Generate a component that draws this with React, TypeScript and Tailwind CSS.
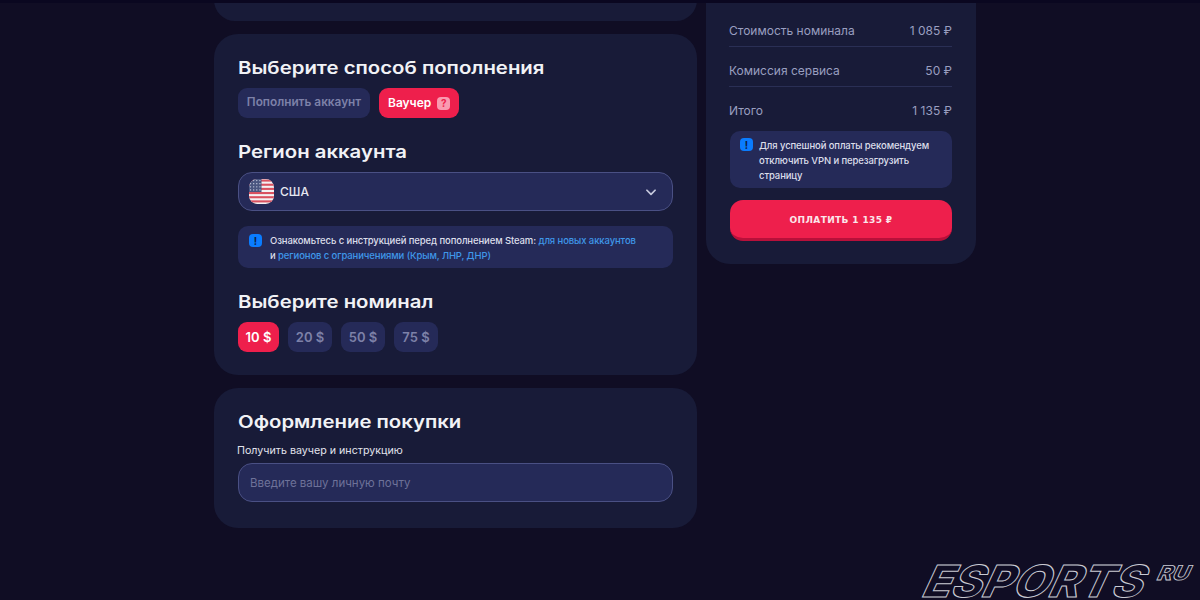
import React from "react";

const H = ({ children, className = "" }: { children: React.ReactNode; className?: string }) => (
  <h2 className={"origin-left scale-x-[1.163] text-[17.5px] leading-[24px] font-semibold whitespace-nowrap text-[#f1f2f6] " + className}>{children}</h2>
);

const Info = () => (
  <span className="flex h-[13px] w-[13px] shrink-0 items-center justify-center rounded-[4px] bg-[#0a7cff] text-[10px] leading-none font-bold text-[#0d1b44]">!</span>
);

const Flag = () => (
  <svg width="25" height="25" viewBox="0 0 24 24" className="shrink-0">
    <defs>
      <clipPath id="f"><rect width="24" height="24" rx="8" /></clipPath>
    </defs>
    <g clipPath="url(#f)">
      <rect width="24" height="24" fill="#f3f1f3" />
      {[0, 4, 8, 12, 16, 20].map((y) => (
        <rect key={y} x="0" y={y + 0.5} width="24" height="2" fill="#d9505f" />
      ))}
      <rect width="12" height="12.5" fill="#4a5680" />
      {[2, 5, 8, 11].map((y) =>
        [2, 5, 8, 11].map((x) => <circle key={`${x}-${y}`} cx={x - 0.5} cy={y - 0.5} r="0.6" fill="#d7dcec" />)
      )}
    </g>
  </svg>
);

const Row = ({ l, r, line = true }: { l: string; r: string; line?: boolean }) => (
  <div className={"-ml-px flex h-[40px] items-center justify-between pt-[8px] text-[12px] text-[#9a9fc0] " + (line ? "border-b border-[#2a2f55]" : "")}>
    <span>{l}</span>
    <span>{r}</span>
  </div>
);

const Nom = ({ t, w, on = false }: { t: string; w: string; on?: boolean }) => (
  <div className={"flex h-[30px] items-center justify-center rounded-[9px] pt-px text-[13px] font-semibold " + w + " " + (on ? "bg-[#ee1f4c] text-white" : "bg-[#252a58] text-[#7d81a8]")}>{t}</div>
);

export default function App() {
  return (
    <div className="relative h-[600px] w-[1200px] overflow-hidden bg-[#100d24] [font-family:Inter,sans-serif]">
      <div className="absolute inset-x-0 top-0 h-[3px] bg-[#0a0720]" />
      <div className="ml-[214px] flex w-[762px] items-start gap-[9px]">
        <div className="flex w-[483px] flex-col gap-[13px]">
          <div className="h-[21px] rounded-b-[24px] bg-[#181b38]" />

          <section className="flex h-[341px] flex-col rounded-[24px] bg-[#181b38] px-[24px] pt-[22px]">
            <H>Выберите способ пополнения</H>
            <div className="mt-[8px] flex gap-[9px]">
              <div className="flex h-[30px] w-[132px] items-center justify-center rounded-[9px] bg-[#252a58] text-[11.8px] font-semibold text-[#7d81a8]">Пополнить аккаунт</div>
              <div className="flex h-[30px] items-center gap-[6px] rounded-[9px] bg-[#ee1f4c] px-[9px] text-[12px] font-semibold text-white">
                Ваучер
                <span className="flex h-[13px] w-[13px] items-center justify-center rounded-[4px] bg-[#f99ab0] text-[10px] leading-none font-bold text-[#ee1f4c]">?</span>
              </div>
            </div>

            <H className="mt-[22px]">Регион аккаунта</H>
            <div className="mt-[8px] flex h-[39px] items-center rounded-[14px] border border-[#4a5084] bg-[#252a58] pr-[14px] pl-[10px]">
              <Flag />
              <span className="ml-[6px] flex-1 text-[12px] font-medium text-[#e6e7f0]">США</span>
              <svg width="14" height="14" viewBox="0 0 24 24" fill="none" stroke="#c5c8dc" strokeWidth="3" strokeLinecap="round" strokeLinejoin="round"><path d="M5 9l7 7 7-7" /></svg>
            </div>

            <div className="mt-[15px] flex h-[42px] items-start gap-[8px] rounded-[10px] bg-[#252a58] pt-[7px] pl-[11px]">
              <div className="pt-[1px]"><Info /></div>
              <p className="text-[9.5px] leading-[15px] font-medium tracking-[-0.1px] text-[#dcdeea]">
                Ознакомьтесь с инструкцией перед пополнением Steam: <span className="text-[#3f97e8]">для новых аккаунтов</span>
                <br />и <span className="text-[#3f97e8]">регионов с ограничениями (Крым, ЛНР, ДНР)</span>
              </p>
            </div>

            <H className="mt-[22px]">Выберите номинал</H>
            <div className="mt-[8px] flex gap-[9px]">
              <Nom t="10 $" w="w-[41px]" on />
              <Nom t="20 $" w="w-[44px]" />
              <Nom t="50 $" w="w-[44px]" />
              <Nom t="75 $" w="w-[44px]" />
            </div>
          </section>

          <section className="flex h-[140px] flex-col rounded-[24px] bg-[#181b38] px-[24px] pt-[22px]">
            <H>Оформление покупки</H>
            <div className="mt-[10px] -ml-px text-[10.7px] leading-[14px] font-normal text-[#e2e3ec]">Получить ваучер и инструкцию</div>
            <div className="mt-[5px] flex h-[39px] items-center rounded-[14px] border border-[#4a5084] bg-[#252a58] px-[11px] pt-[2px] text-[11.5px] text-[#6e7299]">Введите вашу личную почту</div>
          </section>
        </div>

        <aside className="flex h-[264px] w-[270px] flex-col rounded-b-[24px] bg-[#181b38] px-[24px]">
          <div className="mt-[7px]">
            <Row l="Стоимость номинала" r="1 085 ₽" />
            <Row l="Комиссия сервиса" r="50 ₽" />
            <Row l="Итого" r="1 135 ₽" line={false} />
          </div>
          <div className="mt-[4px] flex h-[57px] gap-[6px] rounded-[10px] bg-[#252a58] pt-[7px] pl-[10px]">
            <Info />
            <p className="text-[9.5px] leading-[15px] font-medium tracking-[-0.1px] text-[#dcdeea]">
              Для успешной оплаты рекомендуем
              <br />отключить VPN и перезагрузить
              <br />страницу
            </p>
          </div>
          <div className="mt-[12px] flex h-[41px] items-center justify-center rounded-[13px] border-b-[3px] border-[#b8103a] bg-[#ee1f4c] pt-[3px] text-[9px] font-bold tracking-[0.04em] text-[#fbe6ea] [font-family:'DejaVu_Sans',sans-serif]">
            ОПЛАТИТЬ 1 135 ₽
          </div>
        </aside>
      </div>

      <svg className="absolute top-[562px] left-[920px]" width="280" height="38" viewBox="0 0 280 38" fill="none">
        <text x="16" y="35" textLength="220" lengthAdjust="spacingAndGlyphs" transform="skewX(-25)" stroke="#c9cad3" strokeWidth="1" fontFamily="Inter, sans-serif" fontWeight="800" fontSize="44">ESPORTS</text>
        <text x="244" y="18" textLength="32" lengthAdjust="spacingAndGlyphs" transform="skewX(-25)" stroke="#c9cad3" strokeWidth="0.8" fontFamily="Inter, sans-serif" fontWeight="800" fontSize="20">RU</text>
      </svg>
    </div>
  );
}
